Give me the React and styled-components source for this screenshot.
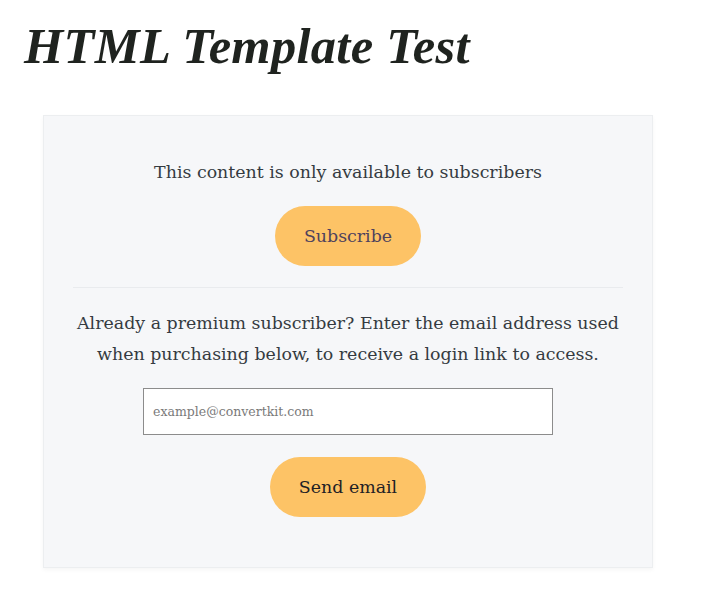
import React from "react";
import styled, { createGlobalStyle } from "styled-components";

const GlobalStyle = createGlobalStyle`
  body {
    margin: 0;
    background: #ffffff;
    font-family: "DejaVu Serif", "Liberation Serif", serif;
  }
`;

const Page = styled.div`
  padding: 13px 43px 40px 24px;
  width: 708px;
  box-sizing: border-box;
`;

const Title = styled.h1`
  margin: 0 0 36px;
  font-family: "Liberation Serif", serif;
  font-style: italic;
  font-weight: 700;
  font-size: 50.5px;
  line-height: 66px;
  color: #1f231f;
  letter-spacing: 0.3px;
`;

const Card = styled.div`
  margin-left: 19px;
  width: 610px;
  box-sizing: border-box;
  background: #f6f7f9;
  border: 1px solid #eceef0;
  box-shadow: 0 2px 4px rgba(0, 0, 0, 0.04);
  padding: 41px 20px 50px;
  display: flex;
  flex-direction: column;
  align-items: center;
  color: #353b41;
`;

const Text = styled.p`
  margin: 0;
  font-size: 17.4px;
  line-height: 31px;
  text-align: center;
`;

const PillButton = styled.button`
  border: none;
  border-radius: 30px;
  background: #fdc366;
  height: 60px;
  padding: 0 29px;
  font-family: "DejaVu Serif", "Liberation Serif", serif;
  font-size: 17.4px;
  color: ${({ $dark }) => ($dark ? "#1e2125" : "#4f425d")};
  margin-top: ${({ $top }) => $top}px;
  cursor: pointer;
`;

const Divider = styled.hr`
  width: 550px;
  border: none;
  border-top: 1px solid #e9ebee;
  margin: 21px 0 20px;
`;

const EmailInput = styled.input`
  width: 410px;
  height: 47px;
  box-sizing: border-box;
  margin-top: 18px;
  border: 1px solid #8c8c8c;
  background: #ffffff;
  padding: 0 9px;
  font-family: "DejaVu Serif", "Liberation Serif", serif;
  font-size: 12.5px;
  color: #333;
  &::placeholder {
    color: #7a7a7a;
  }
`;

export default function App() {
  return (
    <>
      <GlobalStyle />
      <Page>
        <Title>HTML Template Test</Title>
        <Card>
          <Text>This content is only available to subscribers</Text>
          <PillButton $top={18}>Subscribe</PillButton>
          <Divider />
          <Text>
            Already a premium subscriber? Enter the email address used
            <br />
            when purchasing below, to receive a login link to access.
          </Text>
          <EmailInput type="email" placeholder="example@convertkit.com" />
          <PillButton $dark $top={22}>
            Send email
          </PillButton>
        </Card>
      </Page>
    </>
  );
}
